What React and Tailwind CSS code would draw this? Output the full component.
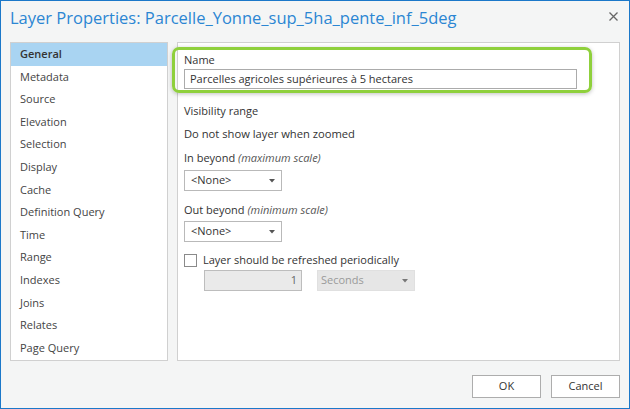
import React from 'react';

const pages = [
  'General', 'Metadata', 'Source', 'Elevation', 'Selection', 'Display', 'Cache',
  'Definition Query', 'Time', 'Range', 'Indexes', 'Joins', 'Relates', 'Page Query',
];

const Caret = ({ color = '#555' }) => (
  <svg width="6" height="4" viewBox="0 0 6 4">
    <path d="M0 0 L6 0 L3 3.5 Z" fill={color} />
  </svg>
);

const ScaleSelect = () => (
  <div className="flex h-[21px] w-[98px] items-center justify-between border border-[#b9b9b9] bg-white pl-[6px] pr-[6px] text-[11px] text-[#333]">
    <span>&lt;None&gt;</span>
    <Caret />
  </div>
);

export default function App() {
  return (
    <div
      className="flex h-[409px] w-[630px] flex-col border border-[#1b78c9] bg-[#f4f5f5] text-[#333]"
      style={{ fontFamily: '"Open Sans", "Noto Sans", sans-serif' }}
    >
      {/* title bar */}
      <div className="flex h-[41px] items-start justify-between">
        <h1 className="ml-[9px] mt-[5px] text-[16.5px] leading-[24px] text-[#2b86d3]">
          Layer Properties: Parcelle_Yonne_sup_5ha_pente_inf_5deg
        </h1>
        <svg className="mr-[11px] mt-[11px]" width="9" height="9" viewBox="0 0 9 9">
          <path d="M0.5 0.5 L8.5 8.5 M8.5 0.5 L0.5 8.5" stroke="#666" strokeWidth="1.3" />
        </svg>
      </div>

      <div className="flex h-[319px] gap-[9px] px-[9px]">
        {/* page list */}
        <div className="w-[158px] border border-[#d0d0d0] bg-white">
          {pages.map((p, i) => (
            <div
              key={p}
              className={
                i === 0
                  ? 'flex h-[22.6px] items-center bg-[#a9d4f2] pl-[9px] text-[11px] font-semibold text-[#333]'
                  : 'flex h-[22.6px] items-center pl-[9px] text-[11px] text-[#444]'
              }
            >
              {p}
            </div>
          ))}
        </div>

        {/* general page */}
        <div className="flex-1 border border-[#d0d0d0] bg-white pl-[6px] text-[11px]">
          <div className="-ml-[12px] mt-[4px] w-[420px] rounded-[7px] border-[3px] border-[#8fd03c] pb-[1px] pl-[9px] pt-[2px] shadow-[0_1px_4px_rgba(0,0,0,0.25)]">
            <div className="leading-[16px]">Name</div>
            <div className="mt-[1px] flex h-[20px] w-[393px] items-center border border-[#ababab] bg-white pl-[5px]">
              Parcelles agricoles supérieures à 5 hectares
            </div>
          </div>

          <div className="mt-[10px] leading-[16px]">Visibility range</div>
          <div className="mt-[7px] text-[11.2px] leading-[16px]">Do not show layer when zoomed</div>

          <div className="mt-[8px] leading-[16px]">
            In beyond <i className="text-[#555]">(maximum scale)</i>
          </div>
          <div className="mt-[4px]">
            <ScaleSelect />
          </div>

          <div className="mt-[11px] leading-[16px]">
            Out beyond <i className="text-[#555]">(minimum scale)</i>
          </div>
          <div className="mt-[3px]">
            <ScaleSelect />
          </div>

          <div className="mt-[10px] flex h-[16px] items-center gap-[6px]">
            <div className="h-[13px] w-[13px] border border-[#8a8a8a] bg-white" />
            <span>Layer should be refreshed periodically</span>
          </div>

          <div className="ml-[20px] mt-[2px] flex gap-[15px]">
            <div className="flex h-[21px] w-[98px] items-center justify-end border border-[#bdbdbd] bg-[#eaeaea] pr-[4px] text-[#666]">
              1
            </div>
            <div className="flex h-[21px] w-[98px] items-center justify-between border border-[#e0e0e0] bg-[#e6e6e6] pl-[3px] pr-[6px] text-[#9a9a9a]">
              <span>Seconds</span>
              <Caret color="#777" />
            </div>
          </div>
        </div>
      </div>

      {/* buttons */}
      <div className="mt-[14px] flex justify-end gap-[10px] pr-[9px]">
        <button className="h-[23px] w-[69px] border border-[#adadad] bg-white text-[11px] text-[#333]">OK</button>
        <button className="h-[23px] w-[69px] border border-[#adadad] bg-white text-[11px] text-[#333]">Cancel</button>
      </div>
    </div>
  );
}
